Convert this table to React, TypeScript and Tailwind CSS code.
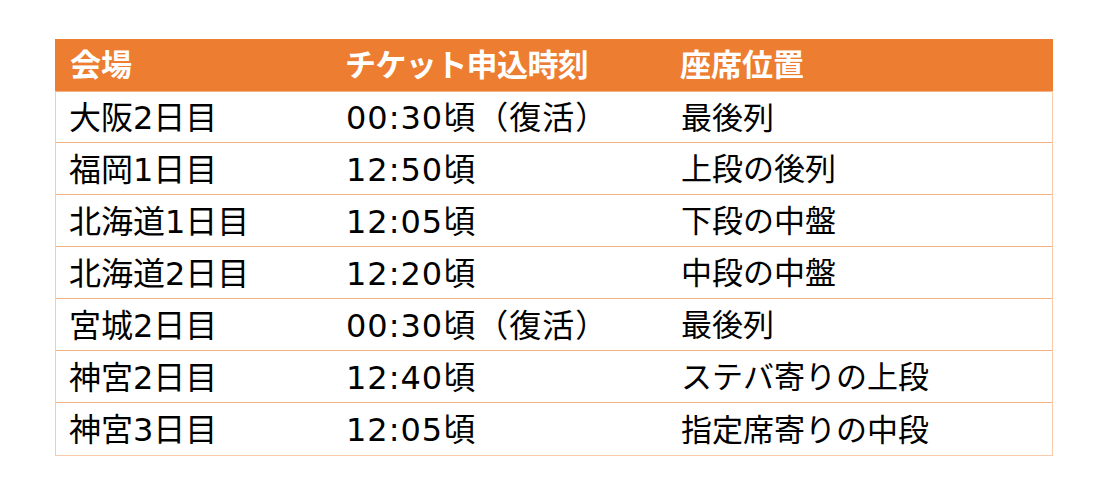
import React from 'react';

const rows: [string, string, string][] = [
  ['大阪2日目', '00:30頃（復活）', '最後列'],
  ['福岡1日目', '12:50頃', '上段の後列'],
  ['北海道1日目', '12:05頃', '下段の中盤'],
  ['北海道2日目', '12:20頃', '中段の中盤'],
  ['宮城2日目', '00:30頃（復活）', '最後列'],
  ['神宮2日目', '12:40頃', 'ステバ寄りの上段'],
  ['神宮3日目', '12:05頃', '指定席寄りの中段'],
];

export default function App() {
  return (
    <div
      className="w-[1105px] h-[491px] bg-white pt-[39px] pl-[55px]"
      style={{ fontFamily: '"DejaVu Sans", "Noto Sans CJK JP", sans-serif' }}
    >
      <div className="w-[998px] border-x border-b border-[#f8cbad]">
        {/* header */}
        <div className="grid grid-cols-[276px_335px_385px] h-[52px] bg-[#ed7d31] text-white font-bold text-[31px] items-center -mx-px">
          <div className="pl-[15px]">会場</div>
          <div className="pl-[14px] tracking-[-0.6px]">チケット申込時刻</div>
          <div className="pl-[14px]">座席位置</div>
        </div>
        {rows.map((r, i) => (
          <div
            key={i}
            className={`grid grid-cols-[276px_335px_385px] h-[52px] items-center text-black ${
              i < rows.length - 1 ? 'border-b border-[#f4b183]' : ''
            } ${i === 0 ? 'border-t border-[#f4b183]' : ''}`}
          >
            <div className="pl-[13px] leading-none pt-[2px] text-[32px]">{r[0]}</div>
            <div className="pl-[14px] leading-none pt-[2px] text-[32px] tracking-[1px]">{r[1]}</div>
            <div className="pl-[14px] leading-none pt-[2px] text-[31px]">{r[2]}</div>
          </div>
        ))}
      </div>
    </div>
  );
}
